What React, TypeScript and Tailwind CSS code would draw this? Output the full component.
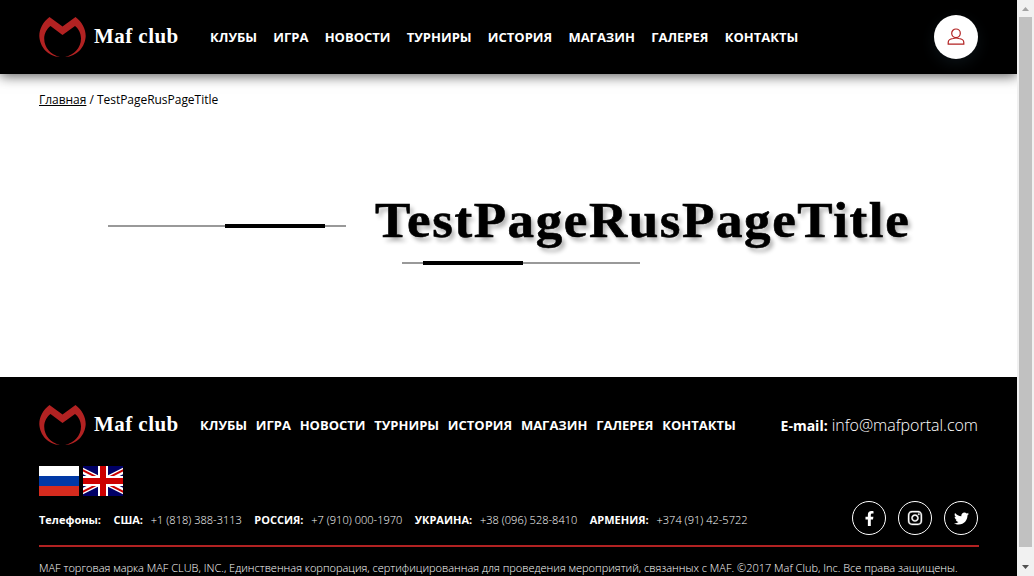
import React from "react";
import { FaFacebookF, FaInstagram, FaTwitter } from "react-icons/fa";

const links = ["КЛУБЫ", "ИГРА", "НОВОСТИ", "ТУРНИРЫ", "ИСТОРИЯ", "МАГАЗИН", "ГАЛЕРЕЯ", "КОНТАКТЫ"];

const phones = [
  ["США:", "+1 (818) 388-3113"],
  ["РОССИЯ:", "+7 (910) 000-1970"],
  ["УКРАИНА:", "+38 (096) 528-8410"],
  ["АРМЕНИЯ:", "+374 (91) 42-5722"],
];

function Logo() {
  return (
    <a className="flex h-[42px] w-[140px] shrink-0 items-center">
      <svg className="h-[42px] w-[47px] shrink-0" viewBox="0 0 47 42" fill="#b22222">
        <path d="M10.5 1 L23.5 10.5 L36.5 1 C43 6 46.7 13 46.7 20 C46.2 31 38 40.5 26 41 C35 39 42 32 42 22.5 C42 17.5 39.5 12.5 36 10 L23.5 19 L11.5 10 C8 12.5 5.2 17.5 5.2 22.5 C5.2 32 12 39 21 41 C9 40.5 0.8 31 0.3 20 C0.3 13 4 6 10.5 1Z" />
      </svg>
      <span className="ml-2 -mt-0.5 whitespace-nowrap font-['Liberation_Serif',serif] text-[21px] leading-[30px] font-bold tracking-[0.45px]">Maf club</span>
    </a>
  );
}

function Header() {
  return (
    <header className="relative flex h-[74px] shrink-0 items-center bg-black pl-[39px] text-white shadow-[0_2px_12px_rgba(0,0,0,0.65)]">
      <Logo />
      <nav className="ml-[31px] flex gap-[16.2px] text-[13px] leading-5 font-bold">
        {links.map((link) => <a key={link} className="whitespace-nowrap">{link}</a>)}
      </nav>
      <button className="mr-[39px] ml-auto flex size-11 items-center justify-center rounded-full bg-white shadow-[0_5px_15px_rgba(60,100,120,0.18)]">
        <svg className="size-[18px]" viewBox="0 0 18 18" fill="none" stroke="#b22222" strokeWidth="1.2">
          <circle cx="9" cy="5.3" r="4.3" />
          <path d="M1.2 16.2 V14.5 C1.2 12 3.6 10.8 6.2 10.5 Q9 9.5 11.8 10.5 C14.4 10.8 16.8 12 16.8 14.5 V16.2Z" />
        </svg>
      </button>
    </header>
  );
}

function FlagRussia() {
  return (
    <svg className="h-[30px] w-10" viewBox="0 0 40 30" shapeRendering="crispEdges">
      <path fill="#fff" d="M0 0H40V10H0Z" />
      <path fill="#0039a6" d="M0 10H40V20H0Z" />
      <path fill="#d52b1e" d="M0 20H40V30H0Z" />
    </svg>
  );
}

function FlagBritain() {
  return (
    <svg className="h-[30px] w-10" viewBox="0 0 40 30">
      <path fill="#006" d="M0 0H40V30H0Z" />
      <path stroke="#fff" strokeWidth="6" d="M-10 0 50 30M50 0 -10 30" />
      <path fill="#c00" d="M0 3.3V5.6L9 10H13.4Z M40 3.3V5.6L31 10H26.6L38 4.3Z M0 26.7V24.6L9 20H13.4Z M40 26.7V24.6L31 20H26.6Z" />
      <path fill="#fff" d="M15 0H25V30H15Z M0 10H40V20H0Z" />
      <path fill="#c00" d="M17 0H23V30H17Z M0 12H40V18H0Z" />
    </svg>
  );
}

function Footer() {
  return (
    <footer className="flex h-[199px] shrink-0 flex-col bg-black pr-[39px] pl-[39px] text-white">
      <div className="mt-[27px] flex h-[42px] items-center">
        <Logo />
        <nav className="ml-[21px] flex gap-[8.7px] text-[13px] leading-5 font-bold">
          {links.map((link) => <a key={link} className="whitespace-nowrap">{link}</a>)}
        </nav>
        <div className="ml-auto flex items-baseline gap-1 whitespace-nowrap">
          <b className="text-[14px]">E-mail:</b>
          <a className="text-[16px] font-light">info@mafportal.com</a>
        </div>
      </div>
      <div className="mt-5 flex gap-1"><FlagRussia /><FlagBritain /></div>
      <div className="mt-[5px] flex h-[34px] items-center justify-between">
        <div className="flex items-center gap-[12.4px] pt-1 text-[11px] leading-4 whitespace-nowrap">
          <b>Телефоны:</b>
          {phones.map(([country, number]) => (
            <span key={country} className="flex gap-[7.8px]"><b>{country}</b><span className="font-light tracking-[0.03px]">{number}</span></span>
          ))}
        </div>
        <div className="flex gap-3">
          <a className="flex size-[34px] items-center justify-center rounded-full border border-white"><FaFacebookF size={15} /></a>
          <a className="flex size-[34px] items-center justify-center rounded-full border border-white"><FaInstagram size={16} strokeWidth={12} stroke="currentColor" /></a>
          <a className="flex size-[34px] items-center justify-center rounded-full border border-white"><FaTwitter size={15} /></a>
        </div>
      </div>
      <div className="mt-[10px] h-0.5 w-[940px] shrink-0 bg-[#b22222]" />
      <p className="mt-[11px] text-[11px] leading-5 font-light whitespace-nowrap">
        MAF торговая марка MAF CLUB, INC., Единственная корпорация, сертифицированная для проведения мероприятий, связанных с MAF. ©2017 Maf Club, Inc. Все права защищены.
      </p>
    </footer>
  );
}

function Scrollbar() {
  return (
    <div className="flex h-full w-[17px] shrink-0 flex-col items-center bg-[#f1f1f1]">
      <svg className="h-[17px] w-[17px] shrink-0" viewBox="0 0 17 17" fill="#a3a3a3"><path d="M5 11 8.5 7 12 11Z" /></svg>
      <div className="h-[530px] w-[13px] shrink-0 bg-[#c1c1c1]" />
      <svg className="mt-3 h-[17px] w-[17px] shrink-0" viewBox="0 0 17 17" fill="#505050"><path d="M5 6 12 6 8.5 10Z" /></svg>
    </div>
  );
}

export default function App() {
  return (
    <div className="flex h-[576px] w-[1034px] overflow-hidden bg-white font-['Open_Sans',sans-serif] text-black">
      <div className="flex w-[1017px] flex-col overflow-hidden">
        <Header />
        <main className="flex h-[303px] shrink-0 flex-col">
          <div className="mt-4 ml-[39px] text-[12px] leading-5 tracking-[-0.03px]"><a className="underline">Главная</a> / TestPageRusPageTitle</div>
          <div className="mt-[80px] flex">
            <div className="mt-[34px] ml-[108px] flex h-1 w-[238px] shrink-0 items-center">
              <span className="h-0.5 w-[117px] bg-[#999]" /><span className="h-1 w-[100px] bg-black" /><span className="h-0.5 w-[21px] bg-[#999]" />
            </div>
            <h1 className="ml-[29px] origin-left scale-x-[1.06] whitespace-nowrap font-['Liberation_Serif',serif] text-[50px] leading-[60px] font-bold tracking-[1.5px] [-webkit-text-stroke:0.6px_#000] [text-shadow:3px_4px_4px_rgba(0,0,0,0.3)]">TestPageRusPageTitle</h1>
          </div>
          <div className="mt-[11px] ml-[402px] flex h-1 w-[238px] items-center">
            <span className="h-0.5 w-[21px] bg-[#999]" /><span className="h-1 w-[100px] bg-black" /><span className="h-0.5 w-[117px] bg-[#999]" />
          </div>
        </main>
        <Footer />
      </div>
      <Scrollbar />
    </div>
  );
}
